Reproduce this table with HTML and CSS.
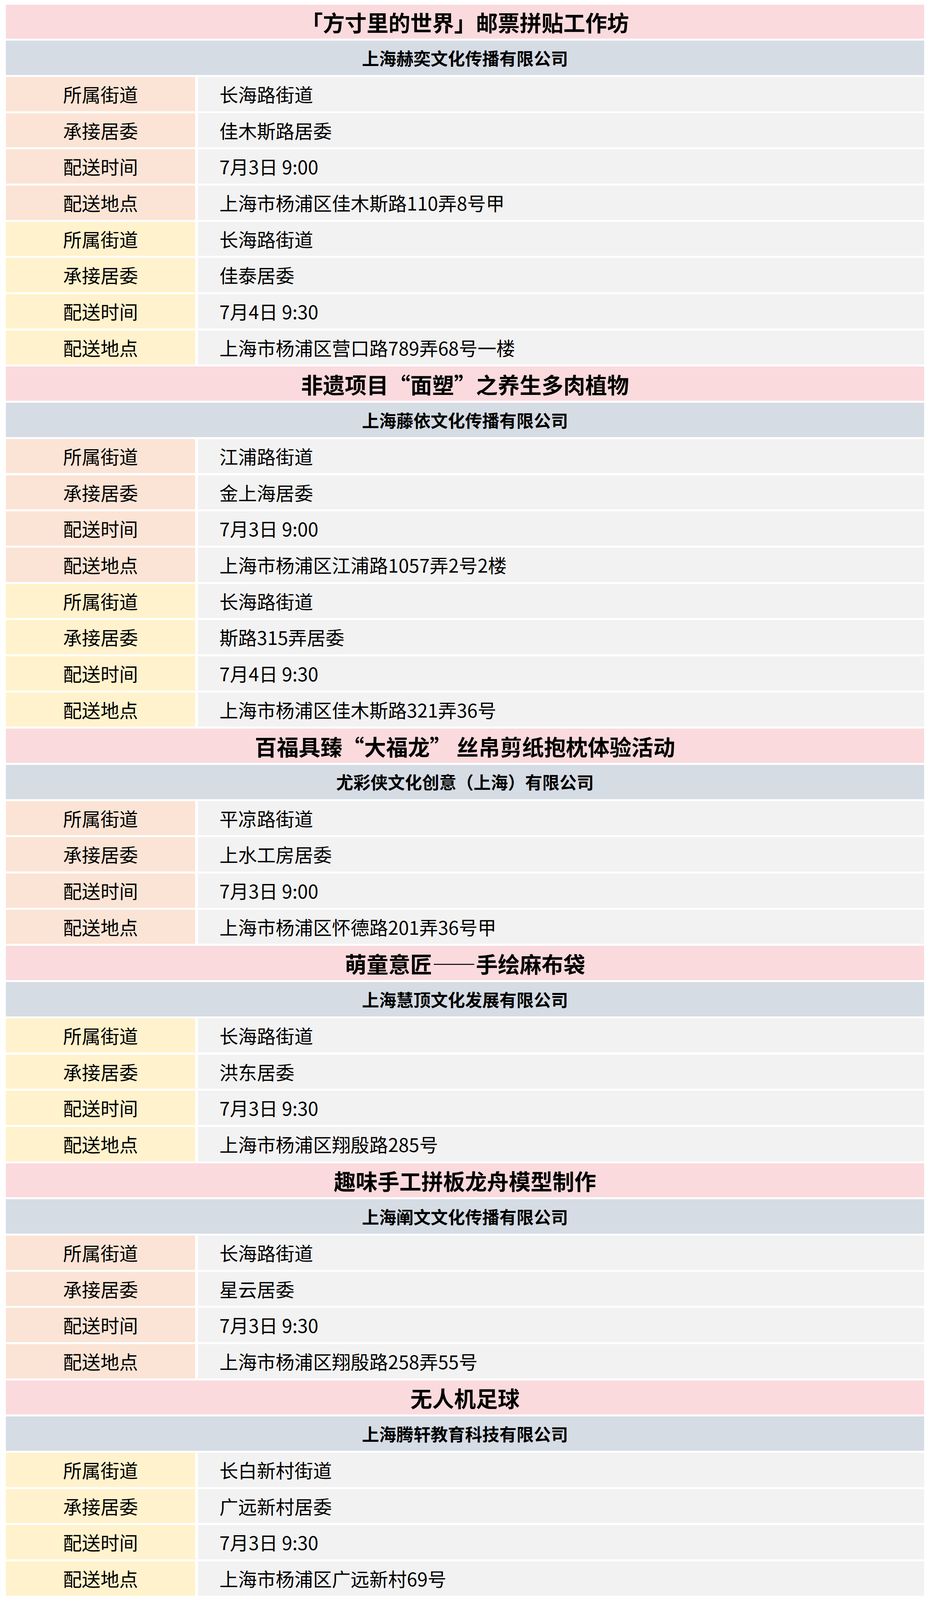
FILE: index.html
```html
<!DOCTYPE html>
<html lang="zh-CN">
<head>
<meta charset="utf-8">
<title>配送安排</title>
<link rel="stylesheet" href="styles.css">
</head>
<body>
<div class="sheet">
  <div class="title">「方寸里的世界」邮票拼贴工作坊</div>
  <div class="company">上海赫奕文化传播有限公司</div>
  <div class="label peach">所属街道</div><div class="value">长海路街道</div>
  <div class="label peach">承接居委</div><div class="value">佳木斯路居委</div>
  <div class="label peach">配送时间</div><div class="value">7月3日 9:00</div>
  <div class="label peach">配送地点</div><div class="value">上海市杨浦区佳木斯路110弄8号甲</div>
  <div class="label yellow">所属街道</div><div class="value">长海路街道</div>
  <div class="label yellow">承接居委</div><div class="value">佳泰居委</div>
  <div class="label yellow">配送时间</div><div class="value">7月4日 9:30</div>
  <div class="label yellow">配送地点</div><div class="value">上海市杨浦区营口路789弄68号一楼</div>

  <div class="title">非遗项目“面塑”之养生多肉植物</div>
  <div class="company">上海藤依文化传播有限公司</div>
  <div class="label peach">所属街道</div><div class="value">江浦路街道</div>
  <div class="label peach">承接居委</div><div class="value">金上海居委</div>
  <div class="label peach">配送时间</div><div class="value">7月3日 9:00</div>
  <div class="label peach">配送地点</div><div class="value">上海市杨浦区江浦路1057弄2号2楼</div>
  <div class="label yellow">所属街道</div><div class="value">长海路街道</div>
  <div class="label yellow">承接居委</div><div class="value">斯路315弄居委</div>
  <div class="label yellow">配送时间</div><div class="value">7月4日 9:30</div>
  <div class="label yellow">配送地点</div><div class="value">上海市杨浦区佳木斯路321弄36号</div>

  <div class="title">百福具臻“大福龙” 丝帛剪纸抱枕体验活动</div>
  <div class="company">尤彩侠文化创意（上海）有限公司</div>
  <div class="label peach">所属街道</div><div class="value">平凉路街道</div>
  <div class="label peach">承接居委</div><div class="value">上水工房居委</div>
  <div class="label peach">配送时间</div><div class="value">7月3日 9:00</div>
  <div class="label peach">配送地点</div><div class="value">上海市杨浦区怀德路201弄36号甲</div>

  <div class="title">萌童意匠——手绘麻布袋</div>
  <div class="company">上海慧顶文化发展有限公司</div>
  <div class="label yellow">所属街道</div><div class="value">长海路街道</div>
  <div class="label yellow">承接居委</div><div class="value">洪东居委</div>
  <div class="label yellow">配送时间</div><div class="value">7月3日 9:30</div>
  <div class="label yellow">配送地点</div><div class="value">上海市杨浦区翔殷路285号</div>

  <div class="title">趣味手工拼板龙舟模型制作</div>
  <div class="company">上海阐文文化传播有限公司</div>
  <div class="label peach">所属街道</div><div class="value">长海路街道</div>
  <div class="label peach">承接居委</div><div class="value">星云居委</div>
  <div class="label peach">配送时间</div><div class="value">7月3日 9:30</div>
  <div class="label peach">配送地点</div><div class="value">上海市杨浦区翔殷路258弄55号</div>

  <div class="title">无人机足球</div>
  <div class="company">上海腾轩教育科技有限公司</div>
  <div class="label yellow">所属街道</div><div class="value">长白新村街道</div>
  <div class="label yellow">承接居委</div><div class="value">广远新村居委</div>
  <div class="label yellow">配送时间</div><div class="value">7月3日 9:30</div>
  <div class="label yellow">配送地点</div><div class="value">上海市杨浦区广远新村69号</div>
</div>
</body>
</html>
```
FILE: styles.css
```css
html, body {
  margin: 0;
  padding: 0;
  background: #ffffff;
}
body {
  font-family: "Noto Sans CJK SC", "Microsoft YaHei", sans-serif;
  color: #000000;
  line-height: 1.2;
}
/* Row pitch follows the window height so all 44 rows fit the frame
   (121px rows / 7px gaps in a 5656px-tall window). */
.sheet {
  display: grid;
  grid-template-columns: 485px 1fr;
  grid-auto-rows: 2.1393vh;
  column-gap: 7px;
  row-gap: 0.12376vh;
  padding: 0.2829vh 15px 0 15px;
}
.title,
.company {
  grid-column: 1 / span 2;
  display: flex;
  align-items: center;
  justify-content: center;
  font-weight: 700;
}
.title {
  background: #fadadd;
  font-size: 56px;
}
.company {
  background: #d6dce4;
  font-size: 44px;
}
.label {
  display: flex;
  align-items: center;
  justify-content: center;
  font-size: 48px;
}
.peach {
  background: #fbe4d5;
}
.yellow {
  background: #fff2cc;
}
.value {
  display: flex;
  align-items: center;
  padding-left: 55px;
  background: #f2f2f2;
  font-size: 48px;
}
```
